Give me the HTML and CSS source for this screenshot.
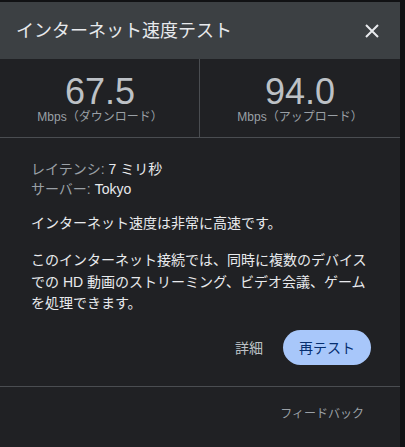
FILE: index.html
```html
<!DOCTYPE html>
<html lang="ja">
<head>
<meta charset="utf-8">
<title>インターネット速度テスト</title>
<link rel="stylesheet" href="styles.css">
</head>
<body>
<div class="dialog">
  <header class="header">
    <h1 class="title">インターネット速度テスト</h1>
    <button class="close" aria-label="閉じる">
      <svg width="14" height="14" viewBox="0 0 14 14"><path d="M1 1L13 13M13 1L1 13" stroke="#e8eaed" stroke-width="2" fill="none"/></svg>
    </button>
  </header>
  <section class="stats">
    <div class="stat">
      <div class="value">67.5</div>
      <div class="unit">Mbps（ダウンロード）</div>
    </div>
    <div class="stat stat-right">
      <div class="value">94.0</div>
      <div class="unit">Mbps（アップロード）</div>
    </div>
  </section>
  <section class="body">
    <div class="meta">
      <div><span class="label">レイテンシ: </span><span class="val">7 ミリ秒</span></div>
      <div><span class="label">サーバー: </span><span class="val">Tokyo</span></div>
    </div>
    <p class="para first">インターネット速度は非常に高速です。</p>
    <p class="para second">このインターネット接続では、同時に複数のデバイスでの HD 動画のストリーミング、ビデオ会議、ゲームを処理できます。</p>
  </section>
  <div class="actions">
    <button class="text-btn">詳細</button>
    <button class="filled-btn">再テスト</button>
  </div>
  <footer class="footer">
    <span class="feedback">フィードバック</span>
  </footer>
</div>
</body>
</html>
```
FILE: styles.css
```css
html, body {
  margin: 0;
  padding: 0;
  background: #111214;
  font-family: "Liberation Sans", "Noto Sans CJK JP", sans-serif;
}
.dialog {
  width: 400px;
  margin-top: 2px;
  height: 445px;
  background: #202124;
  display: flex;
  flex-direction: column;
}
.header {
  height: 57px;
  background: #3c4043;
  display: flex;
  align-items: center;
  justify-content: space-between;
  padding: 0 21px 0 16px;
  box-sizing: border-box;
}
.title {
  margin: 0;
  font-size: 18px;
  font-weight: normal;
  color: #e8eaed;
  line-height: 24px;
}
.close {
  background: none;
  border: 0;
  padding: 0;
  width: 14px;
  height: 14px;
  display: flex;
}
.stats {
  display: grid;
  grid-template-columns: 200px 200px;
  border-bottom: 1px solid #4a4d51;
}
.stat {
  display: flex;
  flex-direction: column;
  align-items: center;
  padding: 15px 0 13px;
}
.stat-right {
  border-left: 1px solid #4a4d51;
  margin-left: -1px;
}
.value {
  font-size: 36px;
  line-height: 36px;
  color: #bdc1c6;
}
.unit {
  font-size: 12px;
  line-height: 14px;
  color: #9aa0a6;
}
.body {
  padding: 21px 32px 0 31px;
  font-size: 14px;
  color: #e8eaed;
}
.meta {
  line-height: 20px;
}
.label {
  color: #9aa0a6;
}
.val {
  color: #e8eaed;
}
.para {
  margin: 0;
  line-height: 22px;
}
.para.first {
  margin-top: 13px;
}
.para.second {
  margin-top: 16px;
  line-height: 21.5px;
}
.actions {
  display: flex;
  justify-content: flex-end;
  align-items: center;
  gap: 20px;
  padding: 15px 29px 21px 0;
  border-bottom: 1px solid #4a4d51;
}
.text-btn {
  background: none;
  border: 0;
  padding: 0;
  font-family: inherit;
  font-size: 14px;
  color: #bdc1c6;
}
.filled-btn {
  background: #a8c7fa;
  border: 0;
  border-radius: 18px;
  height: 35px;
  padding: 0 16px;
  font-family: inherit;
  font-size: 14px;
  color: #062e6f;
}
.footer {
  display: flex;
  justify-content: flex-end;
  padding: 19px 36px 0 0;
}
.feedback {
  font-size: 12px;
  line-height: 16px;
  color: #9aa0a6;
}
```
